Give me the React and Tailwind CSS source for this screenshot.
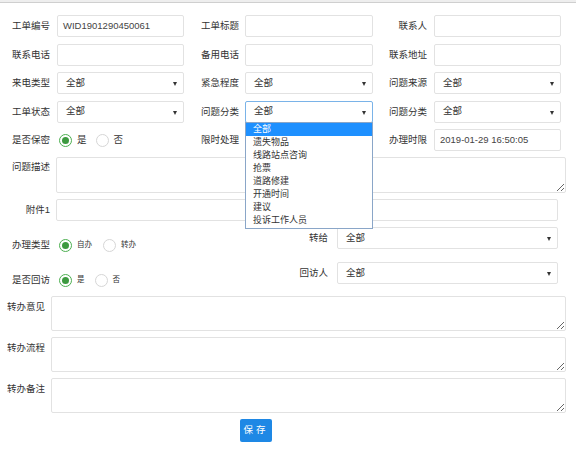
import React from 'react';

const font = "font-['Liberation_Sans','Noto_Sans_CJK_SC',sans-serif]";

function Label({ w, children, className = '' }) {
  return (
    <div className={`shrink-0 whitespace-nowrap text-right text-[9.5px] leading-[10px] text-[#333] ${className}`} style={{ width: w }}>
      {children}
    </div>
  );
}

function Input({ w, value = '', className = '' }) {
  return (
    <div
      className={`h-[22px] shrink-0 rounded-[2px] border border-[#e2e2e2] bg-white px-[5px] text-[9.5px] leading-[20px] text-[#444] ${className}`}
      style={{ width: w }}
    >
      {value}
    </div>
  );
}

function Select({ w, value = '全部', focus = false, className = '' }) {
  return (
    <div
      className={`relative flex h-[22px] shrink-0 items-center rounded-[2px] border bg-white pl-[8px] text-[9.5px] text-[#333] ${
        focus ? 'border-[#7ab3e8]' : 'border-[#e2e2e2]'
      } ${className}`}
      style={{ width: w }}
    >
      {value}
      <span className="absolute right-[6px] top-[9px] h-0 w-0 border-x-[2.5px] border-t-[4px] border-x-transparent border-t-[#333]" />
    </div>
  );
}

function Radio({ checked, label, small }) {
  return (
    <div className="flex items-center">
      <span
        className={`flex h-[13px] w-[13px] items-center justify-center rounded-full border ${
          checked ? 'border-[#4caf50]' : 'border-[#d6d6d6]'
        } bg-white`}
      >
        {checked && <span className="h-[7px] w-[7px] rounded-full bg-[#3d9a40]" />}
      </span>
      <span className={`ml-[5px] text-[#333] ${small ? 'text-[7.5px]' : 'text-[9.5px]'}`}>{label}</span>
    </div>
  );
}

function Textarea({ w, h = 36, className = '' }) {
  return (
    <textarea
      className={`block shrink-0 resize-y rounded-[2px] border border-[#e2e2e2] bg-white outline-none ${className}`}
      style={{ width: w, height: h }}
    />
  );
}

const options = ['全部', '遗失物品', '线路站点咨询', '抢票', '道路修建', '开通时间', '建议', '投诉工作人员'];

export default function App() {
  return (
    <div className={`relative h-[449px] w-[576px] overflow-hidden bg-white ${font}`}>
      <div className="h-[3px] border-b border-[#cfcfcf] bg-[#eeeeee]" />

      <div className="mt-[12px] flex flex-col gap-[6.5px]">
        <div className="flex h-[22px] items-center">
          <Label w={50}>工单编号</Label>
          <Input w={127} className="ml-[7px]" value="WID1901290450061" />
          <Label w={55}>工单标题</Label>
          <Input w={128} className="ml-[6px]" />
          <Label w={54}>联系人</Label>
          <Input w={127} className="ml-[7px]" />
        </div>
        <div className="flex h-[22px] items-center">
          <Label w={50}>联系电话</Label>
          <Input w={127} className="ml-[7px]" />
          <Label w={55}>备用电话</Label>
          <Input w={128} className="ml-[6px]" />
          <Label w={54}>联系地址</Label>
          <Input w={127} className="ml-[7px]" />
        </div>
        <div className="flex h-[22px] items-center">
          <Label w={50}>来电类型</Label>
          <Select w={127} className="ml-[7px]" />
          <Label w={55}>紧急程度</Label>
          <Select w={128} className="ml-[6px]" />
          <Label w={54}>问题来源</Label>
          <Select w={127} className="ml-[7px]" />
        </div>
        <div className="flex h-[22px] items-center">
          <Label w={50}>工单状态</Label>
          <Select w={127} className="ml-[7px]" />
          <Label w={55}>问题分类</Label>
          <div className="relative ml-[6px]">
            <Select w={128} focus />
            <div className="absolute left-0 top-[21px] z-10 w-[128px] border border-[#8aa6c8] bg-white py-[0.5px]">
              {options.map((o, i) => (
                <div
                  key={o}
                  className={`h-[13px] pl-[7px] text-[9px] leading-[13px] ${
                    i === 0 ? 'bg-[#1e90ff] text-white' : 'text-[#333]'
                  }`}
                >
                  {o}
                </div>
              ))}
            </div>
          </div>
          <Label w={54}>问题分类</Label>
          <Select w={127} className="ml-[7px]" />
        </div>
        <div className="flex h-[22px] items-center">
          <Label w={50}>是否保密</Label>
          <div className="ml-[9px] flex w-[125px] items-center gap-[9px]">
            <Radio checked label="是" />
            <Radio label="否" />
          </div>
          <Label w={55}>限时处理</Label>
          <div className="w-[134px]" />
          <Label w={54}>办理时限</Label>
          <Input w={127} className="ml-[7px]" value="2019-01-29 16:50:05" />
        </div>
      </div>

      <div className="mt-[6px] flex items-start">
        <Label w={50} className="pt-[5px]">问题描述</Label>
        <Textarea w={510} className="ml-[6px]" />
      </div>

      <div className="mt-[6px] flex items-center">
        <Label w={50}>附件1</Label>
        <Input w={502} className="ml-[6px]" />
      </div>

      <div className="mt-[6px] flex items-start">
        <div className="mt-[7px] flex h-[22px] w-[290px] items-center">
          <Label w={50}>办理类型</Label>
          <div className="ml-[9px] flex items-center gap-[11px]">
            <Radio checked label="自办" small />
            <Radio label="转办" small />
          </div>
        </div>
        <div className="flex h-[22px] items-center">
          <Label w={38}>转给</Label>
          <Select w={221} className="ml-[9px]" />
        </div>
      </div>

      <div className="mt-[6px] flex items-start">
        <div className="mt-[7px] flex h-[22px] w-[290px] items-center">
          <Label w={50}>是否回访</Label>
          <div className="ml-[9px] flex items-center gap-[10px]">
            <Radio checked label="是" small />
            <Radio label="否" small />
          </div>
        </div>
        <div className="flex h-[22px] items-center">
          <Label w={38}>回访人</Label>
          <Select w={221} className="ml-[9px]" />
        </div>
      </div>

      <div className="mt-[5px] flex flex-col gap-[6px]">
        {['转办意见', '转办流程', '转办备注'].map((t) => (
          <div key={t} className="flex items-start">
            <Label w={45} className="pt-[6px]">{t}</Label>
            <Textarea w={515} h={35} className="ml-[6px]" />
          </div>
        ))}
      </div>

      <div className="mt-[6px] flex pl-[240px]">
        <button className="h-[23px] w-[32px] rounded-[2px] bg-[#1e88e5] text-[9.5px] tracking-[3px] text-white">
          保存
        </button>
      </div>
    </div>
  );
}
